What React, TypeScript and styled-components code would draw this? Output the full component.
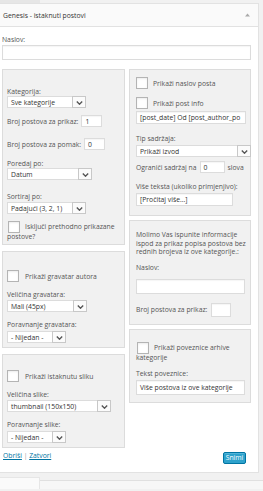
import React from "react";
import styled, { createGlobalStyle } from "styled-components";

const Global = createGlobalStyle`
  html, body { margin: 0; padding: 0; background: #f1f1f1; }
  body {
    font-family: "Open Sans", "Liberation Sans", sans-serif;
    font-size: 6.8px;
    color: #555;
  }
  * { box-sizing: border-box; }
`;

const Page = styled.div`
  width: 263px;
  height: 491px;
  overflow: hidden;
`;

const TopTab = styled.div`
  width: 40px;
  height: 3px;
  background: #e6e6e6;
`;

const Widget = styled.div`
  width: 259px;
  background: #fff;
  border: 1px solid #e2e2e2;
  border-left: none;
`;

const Header = styled.div`
  height: 23px;
  display: flex;
  align-items: center;
  justify-content: space-between;
  padding: 0 8px 0 3px;
  background: #fafafa;
  border-bottom: 1px solid #e2e2e2;
  color: #333;
  line-height: 9px;
`;

const Body = styled.div`
  padding: 0 7px 8px 2px;
`;

const Label = styled.div<{ $mt?: number }>`
  margin-top: ${(p) => p.$mt ?? 0}px;
  line-height: 9px;
  height: 9px;
  white-space: nowrap;
  color: #555;
`;

const TextInput = styled.div<{ $mt?: number; $w?: number; $h?: number }>`
  margin-top: ${(p) => p.$mt ?? 0}px;
  width: ${(p) => (p.$w ? `${p.$w}px` : "100%")};
  height: ${(p) => p.$h ?? 15}px;
  flex: none;
  background: #fff;
  border: 1px solid #dcdcdc;
  box-shadow: inset 0 1px 1px rgba(0, 0, 0, 0.04);
  color: #333;
  padding-left: 3px;
  display: flex;
  align-items: center;
  white-space: nowrap;
  overflow: hidden;
`;

const Columns = styled.div`
  margin-top: 9px;
  display: grid;
  grid-template-columns: 123px 122px;
  column-gap: 4px;
  align-items: start;
`;

const Column = styled.div<{ $gap: number }>`
  display: flex;
  flex-direction: column;
  gap: ${(p) => p.$gap}px;
`;

const Box = styled.div<{ $pt: number; $pb: number; $pl: number }>`
  background: #f1f1f1;
  border: 1px solid #dcdcdc;
  padding: ${(p) => p.$pt}px 3px ${(p) => p.$pb}px ${(p) => p.$pl}px;
  display: flex;
  flex-direction: column;
  align-items: flex-start;
`;

const InlineRow = styled.div<{ $mt?: number; $gap?: number }>`
  margin-top: ${(p) => p.$mt ?? 0}px;
  display: flex;
  align-items: center;
  gap: ${(p) => p.$gap ?? 3}px;
  line-height: 9px;
  white-space: nowrap;
`;

const Check = styled.span`
  display: inline-block;
  width: 12px;
  height: 12px;
  flex: none;
  background: #fff;
  border: 1px solid #b4b4b4;
  box-shadow: inset 0 1px 2px rgba(0, 0, 0, 0.08);
  vertical-align: middle;
`;

const CheckPara = styled.div<{ $mt?: number; $lh: number }>`
  margin-top: ${(p) => p.$mt ?? 0}px;
  line-height: ${(p) => p.$lh}px;
  color: #555;
  ${Check} {
    margin: -2px 5px -2px 1px;
  }
`;

const Para = styled.div<{ $mt?: number }>`
  margin-top: ${(p) => p.$mt ?? 0}px;
  line-height: 8.6px;
  color: #555;
`;

const SelectWrap = styled.div<{ $mt?: number; $w: number }>`
  margin-top: ${(p) => p.$mt ?? 0}px;
  width: ${(p) => p.$w}px;
  height: 12px;
  display: flex;
  flex: none;
`;

const SelectText = styled.div`
  flex: 1;
  min-width: 0;
  background: #fff;
  border: 1px solid #dcdcdc;
  border-right: none;
  color: #333;
  padding-left: 3px;
  display: flex;
  align-items: center;
  white-space: nowrap;
  overflow: hidden;
`;

const SelectArrow = styled.div`
  width: 14px;
  flex: none;
  background: #fbfbfb;
  border: 1px solid #c8c8c8;
  display: flex;
  align-items: flex-end;
  justify-content: center;
  padding-bottom: 2px;
`;

const Footer = styled.div`
  display: flex;
  justify-content: space-between;
  align-items: flex-start;
`;

const Links = styled.div`
  margin-top: 3px;
  padding-left: 1px;
  line-height: 9px;
  color: #999;
`;

const Link = styled.a`
  color: #0074a2;
  text-decoration: underline;
`;

const Button = styled.button`
  margin: 4px 5px 0 0;
  width: 23px;
  height: 12px;
  padding: 0;
  background: #2ea2cc;
  border: 1px solid #0074a2;
  border-radius: 2px;
  box-shadow: inset 0 1px 0 rgba(120, 200, 230, 0.5);
  color: #fff;
  font-family: inherit;
  font-size: 6.8px;
  line-height: 10px;
`;

const NextWidget = styled.div`
  margin-top: 4px;
  display: flex;
  height: 12px;
`;

const NextTab = styled.div`
  width: 40px;
  background: #fafafa;
  border-top: 1px solid #e6e6e6;
  border-right: 1px solid #e6e6e6;
`;

const NextRest = styled.div`
  flex: 1;
  margin-top: 3px;
  border-top: 1px solid #e0e0e0;
  background: #f7f7f7;
`;

const Chevron = () => (
  <svg width="7" height="4" viewBox="0 0 7 4">
    <polyline points="0.8,0.6 3.5,3.2 6.2,0.6" fill="none" stroke="#555" strokeWidth="1.4" />
  </svg>
);

const UpArrow = () => (
  <svg width="5" height="4" viewBox="0 0 5 4">
    <polygon points="0,3.5 2.5,0.5 5,3.5" fill="#aaa" />
  </svg>
);

const Select = ({ w, mt, children }: { w: number; mt?: number; children: React.ReactNode }) => (
  <SelectWrap $w={w} $mt={mt}>
    <SelectText>{children}</SelectText>
    <SelectArrow>
      <Chevron />
    </SelectArrow>
  </SelectWrap>
);

export default function App() {
  return (
    <Page>
      <Global />
      <TopTab />
      <Widget>
        <Header>
          <span>Genesis - istaknuti postovi</span>
          <UpArrow />
        </Header>
        <Body>
          <Label $mt={8}>Naslov:</Label>
          <TextInput $mt={1} />
          <Columns>
            <Column $gap={6}>
              <Box $pt={17} $pb={2} $pl={4}>
                <Label>Kategorija:</Label>
                <Select w={79}>Sve kategorije</Select>
                <InlineRow $mt={7}>
                  Broj postova za prikaz: <TextInput $w={21} $h={12}>1</TextInput>
                </InlineRow>
                <InlineRow $mt={11}>
                  Broj postova za pomak: <TextInput $w={21} $h={12}>0</TextInput>
                </InlineRow>
                <Label $mt={9}>Poredaj po:</Label>
                <Select w={85}>Datum</Select>
                <Label $mt={12}>Sortiraj po:</Label>
                <Select w={79} mt={1}>Padajući (3, 2, 1)</Select>
                <CheckPara $mt={8} $lh={10}>
                  <Check />
                  Isključi prethodno prikazane
                  <br />
                  postove?
                </CheckPara>
              </Box>
              <Box $pt={18} $pb={4} $pl={4}>
                <InlineRow $gap={6}>
                  <Check />
                  Prikaži gravatar autora
                </InlineRow>
                <Label $mt={8}>Veličina gravatara:</Label>
                <Select w={80} mt={1}>Mali (45px)</Select>
                <Label $mt={8}>Poravnanje gravatara:</Label>
                <Select w={59} mt={2}>- Nijedan -</Select>
              </Box>
              <Box $pt={15} $pb={4} $pl={4}>
                <InlineRow $gap={6}>
                  <Check />
                  Prikaži istaknutu sliku
                </InlineRow>
                <Label $mt={8}>Veličina slike:</Label>
                <Select w={104} mt={1}>thumbnail (150x150)</Select>
                <Label $mt={8}>Poravnanje slike:</Label>
                <Select w={59} mt={2}>- Nijedan -</Select>
              </Box>
            </Column>
            <Column $gap={4}>
              <Box $pt={7} $pb={9} $pl={6}>
                <InlineRow $gap={5}>
                  <Check />
                  Prikaži naslov posta
                </InlineRow>
                <InlineRow $mt={8} $gap={5}>
                  <Check />
                  Prikaži post info
                </InlineRow>
                <TextInput $mt={2} $w={110} $h={13}>
                  [post_date] Od [post_author_po
                </TextInput>
                <Label $mt={10}>Tip sadržaja:</Label>
                <Select w={115} mt={2}>Prikaži izvod</Select>
                <InlineRow $mt={4} $gap={3}>
                  Ograniči sadržaj na <TextInput $w={25} $h={12}>0</TextInput> slova
                </InlineRow>
                <Label $mt={9}>Više teksta (ukoliko primjenjivo):</Label>
                <TextInput $mt={2} $w={97} $h={13}>
                  [Pročitaj više...]
                </TextInput>
              </Box>
              <Box $pt={10} $pb={7} $pl={6}>
                <Para>
                  Molimo Vas ispunite informacije
                  <br />
                  ispod za prikaz popisa postova bez
                  <br />
                  rednih brojeva iz ove kategorije.:
                </Para>
                <Label $mt={6}>Naslov:</Label>
                <TextInput $mt={7} $w={109} $h={15} />
                <InlineRow $mt={9} $gap={4}>
                  Broj postova za prikaz: <TextInput $w={20} $h={14} />
                </InlineRow>
              </Box>
              <Box $pt={13} $pb={7} $pl={6}>
                <CheckPara $lh={10.5}>
                  <Check />
                  Prikaži poveznice arhive
                  <br />
                  kategorije
                </CheckPara>
                <Label $mt={5}>Tekst poveznice:</Label>
                <TextInput $mt={2} $w={109} $h={15}>
                  Više postova iz ove kategorije
                </TextInput>
              </Box>
            </Column>
          </Columns>
          <Footer>
            <Links>
              <Link href="#">Obriši</Link> | <Link href="#">Zatvori</Link>
            </Links>
            <Button>Snimi</Button>
          </Footer>
        </Body>
      </Widget>
      <NextWidget>
        <NextTab />
        <NextRest />
      </NextWidget>
    </Page>
  );
}
